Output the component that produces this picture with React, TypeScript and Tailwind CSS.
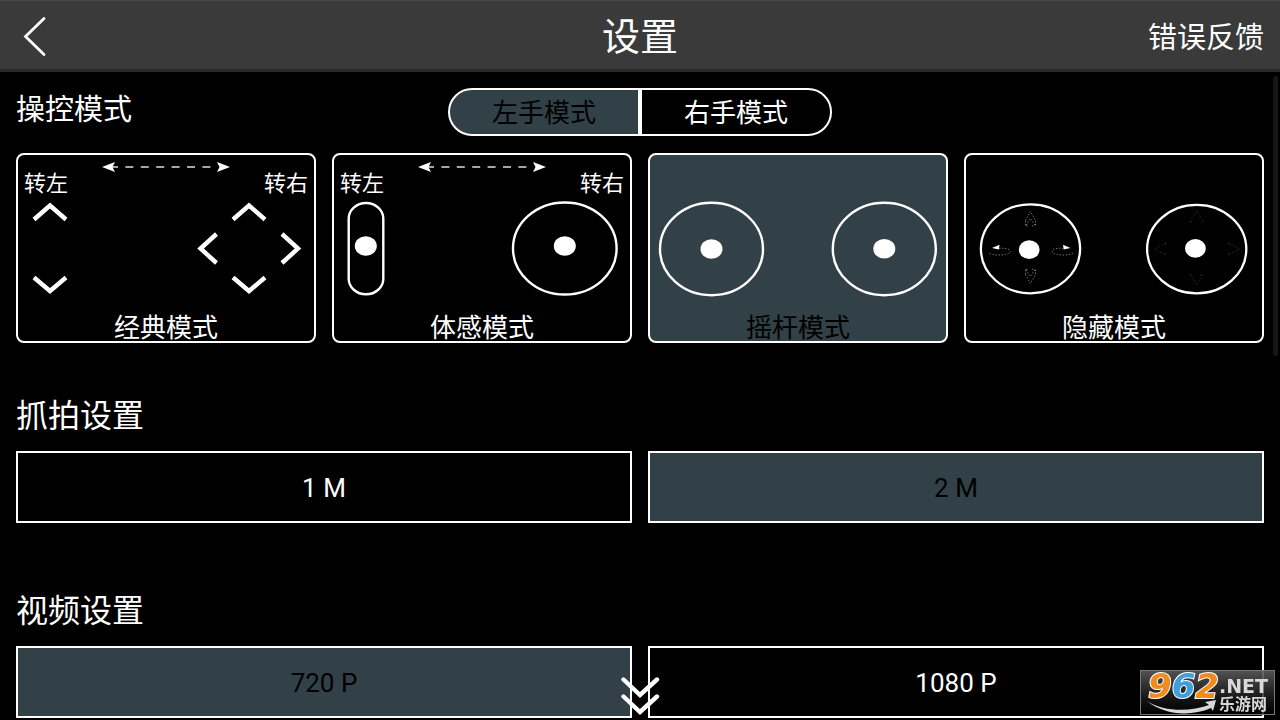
import { useState } from 'react'
import type { ReactNode } from 'react'
import clsx from 'clsx'

interface Option {
  id: string
  label: string
}

interface OptionSectionProps {
  title: string
  options: Option[]
  value: string
  onChange: (id: string) => void
  className?: string
}

interface ModeCardProps {
  label: string
  active: boolean
  onSelect: () => void
  turnLabels?: boolean
  children: ReactNode
}

const HANDS: Option[] = [
  { id: 'left', label: '左手模式' },
  { id: 'right', label: '右手模式' }
]

const PHOTO_SIZES: Option[] = [
  { id: '1m', label: '1 M' },
  { id: '2m', label: '2 M' }
]

const VIDEO_SIZES: Option[] = [
  { id: '720', label: '720 P' },
  { id: '1080', label: '1080 P' }
]

function TurnArrow() {
  return (
    <svg viewBox="0 0 130 12" className="mt-[6px] h-3 w-[130px] self-start" aria-hidden="true">
      <path d="M11 6H116" stroke="#ddd" strokeWidth="1.6" strokeDasharray="8 7.4" strokeDashoffset="2" />
      <path d="M1 6 14 1 11.5 6 14 11Z" fill="#fff" />
      <path d="M129 6 116 1 118.5 6 116 11Z" fill="#fff" />
    </svg>
  )
}

function ModeCard({ label, active, onSelect, turnLabels, children }: ModeCardProps) {
  return (
    <button
      type="button"
      aria-pressed={active}
      onClick={onSelect}
      className={clsx(
        'flex flex-col rounded-lg border-2 border-white',
        active ? 'bg-[#324047] text-black' : 'bg-black text-white'
      )}
    >
      <span className="flex h-[42px] w-full items-end justify-between px-[6px] text-[22px] leading-[26px]">
        {turnLabels && (
          <>
            <span>转左</span>
            <TurnArrow />
            <span>转右</span>
          </>
        )}
      </span>
      <svg viewBox="0 0 296 106" className="h-[106px] w-full" fill="none" aria-hidden="true">
        {children}
      </svg>
      <span className="flex h-[38px] w-full items-end justify-center text-[26px] leading-[26px]">{label}</span>
    </button>
  )
}

function ClassicArt() {
  return (
    <g stroke="#fff" strokeWidth="4.4">
      <path d="M16 22.5 32 8.5 48 22.5M16 80.5 32 94 48 80.5" />
      <path d="M215 22.5 231 8.5 247 22.5M215 80.5 231 94 247 80.5" />
      <path d="M198.5 37 182.5 51.5 198.5 66M264 37 280 51.5 264 66" />
    </g>
  )
}

function MotionArt() {
  return (
    <>
      <g stroke="#fff" strokeWidth="2.4">
        <rect x="14.7" y="6" width="34.6" height="91.3" rx="17.3" ry="15.5" />
        <ellipse cx="230.8" cy="51.5" rx="51.8" ry="46" />
      </g>
      <g fill="#fff">
        <ellipse cx="31.8" cy="49" rx="11" ry="9.8" />
        <ellipse cx="230.8" cy="49" rx="11" ry="9.8" />
      </g>
    </>
  )
}

function JoystickArt() {
  return (
    <>
      <g stroke="#fff" strokeWidth="2.4">
        <ellipse cx="61.5" cy="52" rx="51.5" ry="46.2" />
        <ellipse cx="234.3" cy="52" rx="51.5" ry="46.2" />
      </g>
      <g fill="#fff">
        <ellipse cx="61.5" cy="52" rx="11" ry="9.8" />
        <ellipse cx="234.3" cy="51.7" rx="11" ry="9.8" />
      </g>
    </>
  )
}

function HiddenArt() {
  return (
    <>
      <g stroke="#fff" strokeWidth="2.3">
        <ellipse cx="64.5" cy="51.8" rx="49.6" ry="44.5" />
        <ellipse cx="230.7" cy="52.1" rx="49.6" ry="44.3" />
      </g>
      <g fill="#fff">
        <ellipse cx="63.2" cy="52.7" rx="10.4" ry="9.4" />
        <ellipse cx="229.4" cy="51.4" rx="10.4" ry="9.4" />
        <path d="M26 51 33.5 47.8 32.8 52.6Z" />
        <path d="M104.5 51 97 47.8 97.7 52.6Z" />
      </g>
      <g stroke="#808080" strokeWidth="0.9" strokeDasharray="1.4 1.6">
        <path d="M33 51.4C41 50.6 45 52.5 44 55.2C42 59 24 59 22.3 55" />
        <path d="M97.5 51.4C89.5 50.6 85.5 52.5 86.5 55.2C88.5 59 106.5 59 108.2 55" />
        <path d="M59.5 23.5 64.4 14.5 69.5 23.5V29L64.4 21.5 59.5 29V23.5M60 28.8H63M66 28.8H69" />
        <path d="M59.5 77.5 64.4 86.5 69.5 77.5V72L64.4 79.5 59.5 72V77.5M60 72.2H63M66 72.2H69" />
      </g>
      <g stroke="#333" strokeWidth="0.9" strokeDasharray="1.4 1.8">
        <path d="M224 25 230.7 14 237.4 25H234M224 25H227" />
        <path d="M224 78 230.7 88 237.4 78H234M224 78H227" />
        <path d="M199.5 46 188.5 52.2 199.5 58V54M199.5 46V49" />
        <path d="M262.5 46 273.5 52.2 262.5 58V54M262.5 46V49" />
      </g>
    </>
  )
}

const MODES = [
  { id: 'classic', label: '经典模式', turnLabels: true, art: <ClassicArt /> },
  { id: 'motion', label: '体感模式', turnLabels: true, art: <MotionArt /> },
  { id: 'joystick', label: '摇杆模式', turnLabels: false, art: <JoystickArt /> },
  { id: 'hidden', label: '隐藏模式', turnLabels: false, art: <HiddenArt /> }
]

function OptionSection({ title, options, value, onChange, className }: OptionSectionProps) {
  return (
    <section className={className}>
      <h2 className="mb-[14px] text-[32px] leading-[42px]">{title}</h2>
      <div className="grid grid-cols-2 gap-4">
        {options.map((option) => (
          <button
            key={option.id}
            type="button"
            aria-pressed={value === option.id}
            onClick={() => onChange(option.id)}
            className={clsx(
              'h-[72px] border-2 border-white pt-[2px] text-[26px]',
              value === option.id ? 'bg-[#324047] text-black' : 'bg-black text-white'
            )}
          >
            {option.label}
          </button>
        ))}
      </div>
    </section>
  )
}

function SiteBadge() {
  return (
    <svg viewBox="0 0 135 45" className="fixed right-[5px] bottom-[5px] h-[45px] w-[135px] overflow-visible">
      <defs>
        <linearGradient id="badge-bg" x1="0" y1="0" x2="0" y2="1">
          <stop offset="0" stopColor="#5c5c5c" stopOpacity="0.9" />
          <stop offset="0.7" stopColor="#151515" stopOpacity="0.8" />
          <stop offset="1" stopColor="#000" stopOpacity="0.8" />
        </linearGradient>
      </defs>
      <rect x="0.5" y="0.5" width="134" height="44" fill="url(#badge-bg)" stroke="#777" />
      <path d="M7 31C24 42 50 42 69 35L65 32 76 30 73 41 71 38C50 47 24 45 7 31Z" fill="#d8d8d8" />
      <text
        x="8"
        y="28"
        fontSize="34"
        stroke="#fff"
        strokeWidth="2"
        paintOrder="stroke"
        className="font-['DejaVu_Sans',sans-serif] font-bold italic"
      >
        <tspan fill="#f08c1e">9</tspan>
        <tspan fill="#3f9fdc">6</tspan>
        <tspan fill="#f08c1e">2</tspan>
      </text>
      <text x="79" y="23" fontSize="19" fill="#d8d8d8" className="font-['DejaVu_Sans',sans-serif] font-bold">
        .NET
      </text>
      <text x="79" y="40" fontSize="16" fill="#d8d8d8" className="font-['Noto_Sans_CJK_SC',sans-serif] font-bold">
        乐游网
      </text>
    </svg>
  )
}

export default function App() {
  const [hand, setHand] = useState('left')
  const [mode, setMode] = useState('joystick')
  const [photo, setPhoto] = useState('2m')
  const [video, setVideo] = useState('720')

  return (
    <div className="min-h-screen bg-black font-[Roboto,'Noto_Sans_CJK_SC',sans-serif] text-white">
      <header className="grid h-[72px] grid-cols-[1fr_auto_1fr] items-center border-t border-b-3 border-t-[#484848] border-b-[#292929] bg-[#3a3a3a] px-4 pt-[3px]">
        <button type="button" aria-label="返回" className="justify-self-start">
          <svg viewBox="0 0 36 44" className="h-11 w-9" fill="none">
            <path d="M28 3.5 9.5 21.5 28 39.5" stroke="#fff" strokeWidth="2.8" strokeLinecap="round" />
          </svg>
        </button>
        <h1 className="text-[38px] leading-[44px]">设置</h1>
        <a href="#feedback" className="justify-self-end pt-[2px] text-[29px] leading-9">
          错误反馈
        </a>
      </header>

      <main className="px-4 pt-4">
        <section>
          <div className="grid grid-cols-[1fr_384px_1fr] items-start">
            <h2 className="text-[29px] leading-[44px]">操控模式</h2>
            <div className="grid grid-cols-2">
              {HANDS.map((item) => (
                <button
                  key={item.id}
                  type="button"
                  aria-pressed={hand === item.id}
                  onClick={() => setHand(item.id)}
                  className={clsx(
                    'h-12 border-2 border-white pt-[2px] text-[26px] first:rounded-l-full last:rounded-r-full',
                    hand === item.id ? 'bg-[#324047] text-black' : 'bg-black text-white'
                  )}
                >
                  {item.label}
                </button>
              ))}
            </div>
          </div>
          <div className="mt-[17px] grid grid-cols-4 gap-4">
            {MODES.map((item) => (
              <ModeCard
                key={item.id}
                label={item.label}
                active={mode === item.id}
                onSelect={() => setMode(item.id)}
                turnLabels={item.turnLabels}
              >
                {item.art}
              </ModeCard>
            ))}
          </div>
        </section>

        <OptionSection
          title="抓拍设置"
          options={PHOTO_SIZES}
          value={photo}
          onChange={setPhoto}
          className="mt-[52px]"
        />
        <OptionSection
          title="视频设置"
          options={VIDEO_SIZES}
          value={video}
          onChange={setVideo}
          className="mt-[67px]"
        />
      </main>

      {/* scroll thumb */}
      <div className="fixed top-[76px] right-[2px] h-[280px] w-[5px] rounded-full bg-[#161616]" />

      <button type="button" aria-label="更多" className="fixed bottom-1 left-1/2 -translate-x-1/2">
        <svg viewBox="0 0 40 40" className="h-10 w-10" fill="none">
          <path
            d="M3.5 3.5 20 19 37 3.5M3.5 20.5 20 36 37 20.5"
            stroke="#fff"
            strokeWidth="4.4"
            strokeLinecap="round"
          />
        </svg>
      </button>

      <SiteBadge />
    </div>
  )
}
